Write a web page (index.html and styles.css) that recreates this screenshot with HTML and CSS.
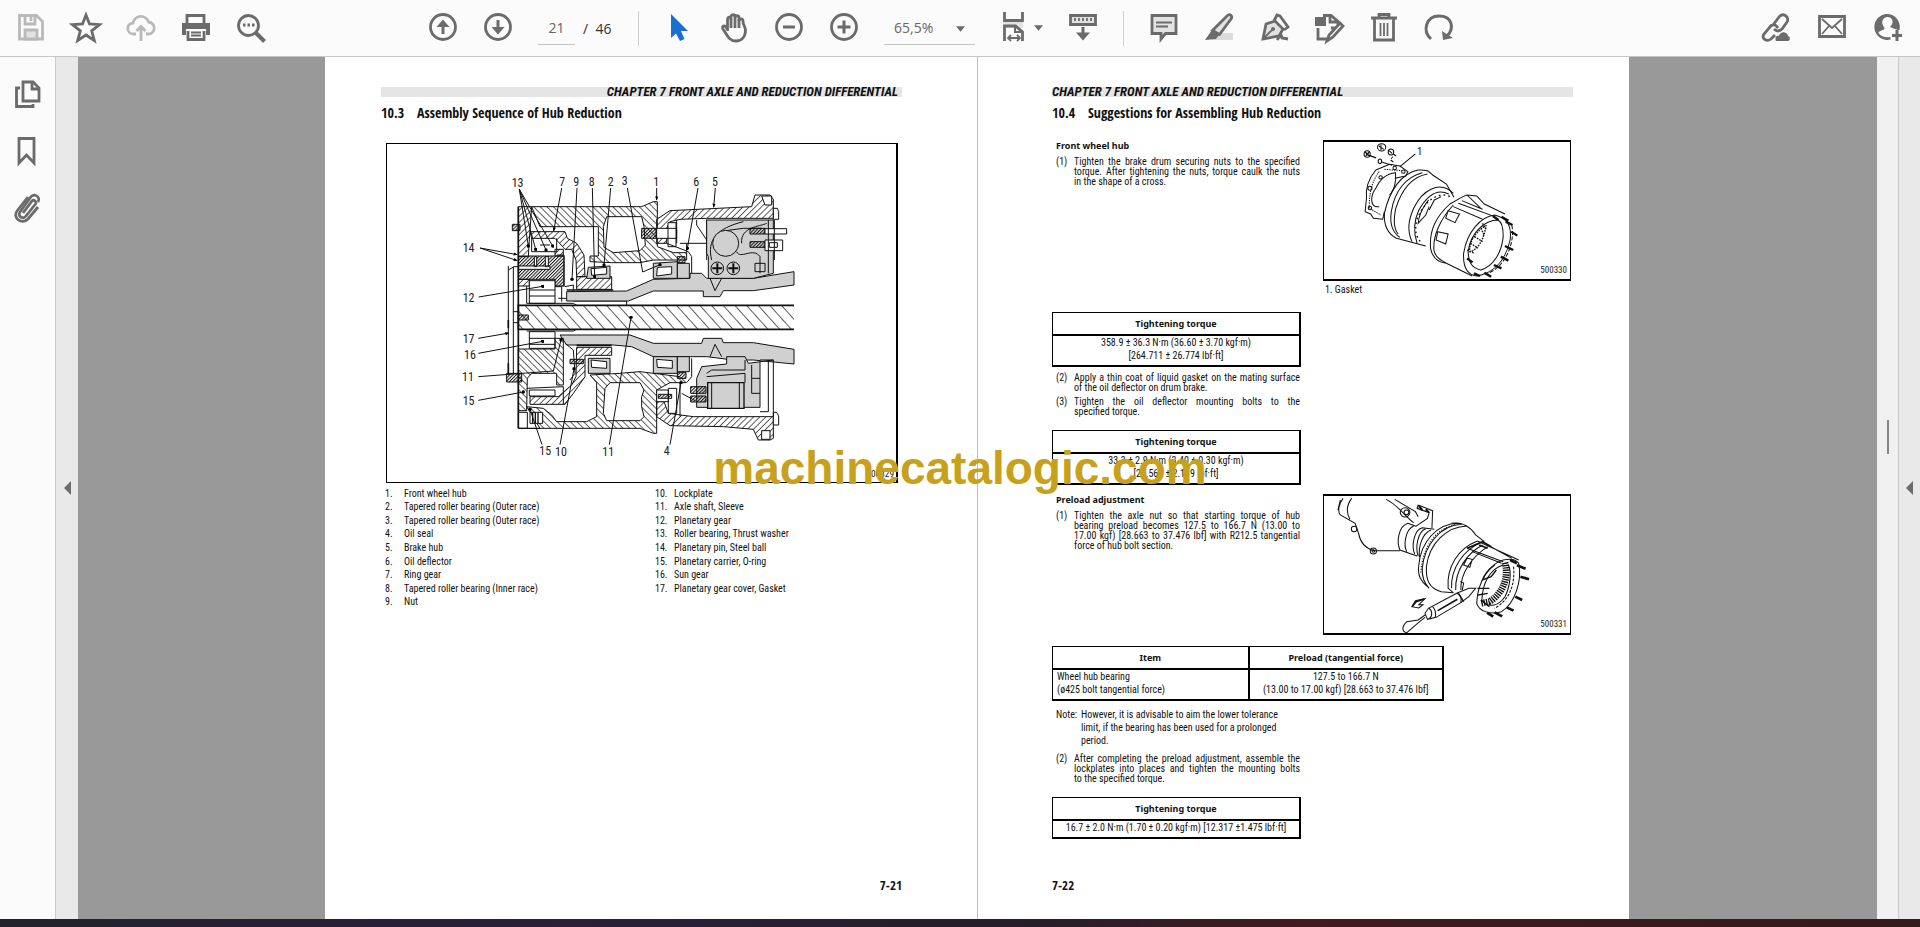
FILE: index.html
```html
<!DOCTYPE html>
<html lang="en">
<head>
<meta charset="utf-8">
<title>Document viewer</title>
<link rel="stylesheet" href="styles.css">
</head>
<body>
<header class="toolbar">
  <div class="tools">
    <button class="tool off" aria-label="Save"><svg viewBox="0 0 28 28"><path d="M2.500 1.500h17l6 6v17.500h-23z"/><path d="M8 2v8h10v-7M14 3v4"/><path class="pale" d="M8 16h12v9H8z"/></svg></button>
    <button class="tool" aria-label="Favourite"><svg viewBox="0 0 28 28"><path d="M14 1l3.500 9 10 .6-7.800 6.200 2.600 9.700-8.300-5.500-8.300 5.500 2.600-9.700L.5 10.600l10-.6z"/></svg></button>
    <button class="tool off" aria-label="Upload"><svg viewBox="0 0 28 28"><path d="M9 20H6.500a5.500 5.500 0 0 1-.5-11 8 8 0 0 1 15.500-1A6 6 0 0 1 21 20h-2"/><path d="M14 27V13M9.500 17l4.500-4.500 4.500 4.500"/></svg></button>
    <button class="tool" aria-label="Print"><svg viewBox="0 0 28 28"><path class="fill" d="M0 9h28v12h-4v-6H4v6H0z"/><path class="fill" d="M0 9h28v5H0z"/><path d="M5 9V1.500h17V9M6 17v8.500h16V17M2 12v9M26 12v9"/><path class="thin" d="M9 18.500h10M9 21.500h10"/></svg></button>
    <button class="tool" aria-label="Search"><svg viewBox="0 0 28 28"><circle cx="11.500" cy="11.500" r="10"/><path d="M18.500 18.500l9 9" stroke-width="4"/><path d="M6 11h2.500M10.500 11h2.500M15 11h2.500"/></svg></button>
  </div>
  <div class="center">
    <div class="tools">
      <button class="tool" aria-label="Previous page"><svg viewBox="0 0 28 28"><circle cx="14" cy="13" r="12.500"/><path d="M14 20V8" stroke-width="3"/><path class="fill" d="M7.500 13L14 5.500l6.500 7.500z"/></svg></button>
      <button class="tool" aria-label="Next page"><svg viewBox="0 0 28 28"><circle cx="14" cy="13" r="12.500"/><path d="M14 6v12" stroke-width="3"/><path class="fill" d="M7.500 13l6.500 7.500 6.500-7.500z"/></svg></button>
    </div>
    <div class="pager"><input aria-label="Page" value="21"><span>/&nbsp; 46</span></div>
    <i class="rule"></i>
    <div class="tools">
      <button class="tool" aria-label="Select"><svg viewBox="0 0 28 28"><path fill="#1b6fd0" stroke="none" d="M6 0v24l5-4.500 4 7.500 4.500-2-3.500-8h7z"/></svg></button>
      <button class="tool" aria-label="Pan"><svg viewBox="0 0 28 28"><path d="M7.500 17V5.500c0-3 3.500-3 3.500 0V3c0-3 4-3 4 0v1c0-3 4-3 4 0v3c0-2.500 4-3 4 0-.2 4 2.500 6 2.500 9 0 7-4 11-9.500 11-7 0-9-6-13-12-1.500-3 1.500-4 3-2l2 3.500"/><path d="M11 5v9M15 4v10M19 5v9"/></svg></button>
      <button class="tool" aria-label="Zoom out"><svg viewBox="0 0 28 28"><circle cx="14" cy="13" r="12.500"/><path d="M8 13h12" stroke-width="3"/></svg></button>
      <button class="tool" aria-label="Zoom in"><svg viewBox="0 0 28 28"><circle cx="14" cy="13" r="12.500"/><path d="M7.500 13h13M14 6.500v13" stroke-width="3"/></svg></button>
    </div>
    <div class="zoom"><select aria-label="Zoom"><option>65,5%</option></select><svg class="caret" viewBox="0 0 10 6"><path d="M0 0h10L5 6z"/></svg></div>
    <button class="tool fit" aria-label="Page fit"><svg viewBox="0 0 28 28"><path class="pale" stroke="none" d="M2 7h20v7H2z"/><path d="M3.500-2v8.500h18V-2M3.500 27V12h11l7 6v9"/><path d="M14 12v6h7" stroke-width="2"/><path class="thin" d="M8 24h10M10 21l-3 3 3 3M16 21l3 3-3 3"/></svg><svg class="caret" viewBox="0 0 10 6"><path d="M0 0h10L5 6z"/></svg></button>
    <button class="tool" aria-label="Read mode"><svg viewBox="0 0 28 28"><path class="pale" d="M1.500 1.500h25v9h-25z"/><path class="thin" d="M6 4v4M10 4v4M14 4v4M18 4v4M22 4v4" stroke-dasharray="3 1"/><path d="M14 13v9" stroke-width="3"/><path class="fill" d="M7 18.500h14l-7 8z"/></svg></button>
    <i class="rule"></i>
    <div class="tools">
      <button class="tool" aria-label="Comment"><svg viewBox="0 0 28 28"><path class="pale" d="M2 1.500h24v18H15.500L11 25v-5.500H2z"/><path class="thin" d="M6 8.500h16M6 12.500h12"/></svg></button>
      <button class="tool" aria-label="Highlight"><svg viewBox="0 0 28 28"><path fill="#dcdcdc" stroke="none" d="M7 19h21v7H7z"/><path class="pale" d="M22 2c3-3 6 0 4 3L14.500 20.500l-7-4z"/><path class="fill" d="M7 16l7 5-3 4-11 1z"/></svg></button>
      <button class="tool" aria-label="Sign"><svg viewBox="0 0 28 28"><path class="pale" d="M15 7l8 8-4 7L3 25 6 10z"/><path d="M14 7l3-6 3 1 8 11-4 3"/><path class="thin" d="M3 25l9-9"/><circle class="fill" cx="13" cy="15" r="2"/><path d="M17 26l4-5 1 3 6 1"/></svg></button>
      <button class="tool" aria-label="Edit document"><svg viewBox="0 0 28 28"><path class="fill" d="M0 3h11v9H0z"/><path d="M8 1.500h8l7 6V11M15 2v6h7M3 14v11h9M16 19l9-10 3 3-10 11-6 4 2-6zM16 14h4"/></svg></button>
      <button class="tool" aria-label="Delete"><svg viewBox="0 0 28 28"><path d="M1 4h26M9 3V.5h10V3M4.500 5v21h19V5"/><path class="thin" d="M10.500 9v13M14 9v13M17.500 9v13"/></svg></button>
      <button class="tool" aria-label="Rotate"><svg viewBox="0 0 28 28"><path d="M6 25C-3 17 1 2 14 2s16 12 8 20" stroke-width="3"/><path class="fill" d="M17 17l1 9 10-2z"/></svg></button>
    </div>
  </div>
  <div class="tools share">
    <button class="tool" aria-label="Share link"><svg viewBox="0 0 28 28"><path d="M11 11l6-8c4-5 11 0 8 5l-5 7c-3 3-6 2-8 0M16 14c-3-5-7-3-8-1l-6 7c-3 5 3 8 7 5l4-4"/><path class="fill" d="M14 27c-2-5 2-6 3-5 1-5 8-5 9 0 3 1 2 5 0 5z"/></svg></button>
    <button class="tool" aria-label="E-mail"><svg viewBox="0 0 28 28"><path d="M1.500 2.500h25v20h-25z"/><path class="thin" d="M4 5l10 9L24 5M4 20l7-8M24 20l-7-8"/></svg></button>
    <button class="tool" aria-label="Add person"><svg viewBox="0 0 28 28"><path class="fill" fill-rule="evenodd" d="M13 0a13 13 0 0 1 12.500 16H24l-3-1-5-2c5-5 2-10-2.500-10S6 8 10.500 14c0 3-6 2-6 5 3 4 7 5 12 4v2.600A13 13 0 1 1 13 0z"/><path d="M23 16v11M18 21.500h10" stroke-width="3"/></svg></button>
  </div>
</header>

<div class="workspace">
  <nav class="sidebar">
    <button class="tool" aria-label="Thumbnails"><svg viewBox="0 0 28 28"><path d="M9 2h10l6 6v13H9z"/><path d="M18 2v7h7M6 8H2.500v18.500H19V24"/></svg></button>
    <button class="tool" aria-label="Bookmarks"><svg viewBox="0 0 28 28"><path d="M5 1.500h15V26l-7.500-8L5 26z"/></svg></button>
    <button class="tool" aria-label="Attachments"><svg viewBox="0 0 28 28"><path d="M9 19L18 7c2-2 5 1 3.500 3L12 22c-3 4-9 0-6-4L16 4c4-6 11-1 8 4"/><path d="M24 13L14 25C8 31-2 24 3 17L14 3"/></svg></button>
  </nav>
  <button class="handle" aria-label="Toggle navigation pane"><svg viewBox="0 0 7 14"><path d="M7 0v14L0 7z"/></svg></button>

  <main class="viewer">
    <article class="page left">
      <p class="chapter"><span>CHAPTER 7 FRONT AXLE AND REDUCTION DIFFERENTIAL</span></p>
      <h2><span>10.3</span>Assembly Sequence of Hub Reduction</h2>
      <figure class="assembly">
        <svg viewBox="-159 -48 1527 1014" role="img" aria-label="Hub reduction section">
          <defs>
            <pattern id="ha" width="14" height="14" patternUnits="userSpaceOnUse" patternTransform="rotate(-45)"><path d="M0 0v14" stroke="#111" stroke-width="4"/></pattern>
            <pattern id="hb" width="13" height="13" patternUnits="userSpaceOnUse" patternTransform="rotate(45)"><path d="M0 0v13" stroke="#111" stroke-width="4"/></pattern>
            <pattern id="hc" width="26" height="26" patternUnits="userSpaceOnUse" patternTransform="rotate(-42)"><path d="M0 0v26" stroke="#111" stroke-width="4"/></pattern>
            <pattern id="hd" width="7" height="7" patternUnits="userSpaceOnUse" patternTransform="rotate(45)"><path d="M0 0v7" stroke="#111" stroke-width="6"/></pattern>
            <marker id="ar" viewBox="0 0 10 10" refX="9" refY="5" markerWidth="16" markerHeight="12" markerUnits="userSpaceOnUse" orient="auto"><path d="M0 1l10 4-10 4z"/></marker>
            <marker id="dt" viewBox="0 0 10 10" refX="5" refY="5" markerWidth="10" markerHeight="10" markerUnits="userSpaceOnUse"><circle cx="5" cy="5" r="5"/></marker>
          </defs>
          <g class="ink">
            <path fill="url(#ha)" fill-rule="evenodd" d="M275 140H605L640 125H652V260L700 278H740V300H640L600 308H515L450 305V288H475V200H300zM500 170H605L612 200 616 255 600 272 520 278 492 262 490 200z"/>
            <path fill="url(#hb)" d="M235 140H275L268 240 265 290H235z"/>
            <path fill="url(#hb)" d="M270 215H375L382 235 410 250 432 285 435 350H410L408 300 395 268 375 268 370 262 345 235H275z"/>
            <path d="M275 235V275H350V235M300 255H330M350 285H372V380"/>
            <path fill="url(#hb)" d="M345 268H370V288H345z"/>
            <path fill="url(#hd)" d="M235 288H372V378H345V358H235z"/>
            <path fill="#fff" d="M235 318H330V328H235zM283 290h7v30h-7zM316 290h9v30h-9z"/>
            <path fill="url(#hb)" d="M235 358H268V378H235z"/>
            <path fill="#fff" d="M268 362H345V430H268zM268 390H345M268 408H345"/>
            <path d="M260 378V430M345 380H365V425M375 380L400 375V395M355 415H400V423H560V435"/>
            <path class="g" d="M380 395L560 393 640 358 750 355V340H785L800 355H940L1062 335V375L940 392H850L840 410H790V393H640L565 423H380z"/>
            <path d="M810 355L825 392 845 355"/>
            <path fill="url(#hb)" d="M410 350H515V388H410z"/>
            <path class="g" d="M445 322L510 318V355H440z"/><path fill="#fff" d="M453 326L500 322V342L455 346z"/>
            <path class="g" d="M640 310L712 305V355H640z"/><path fill="#fff" d="M652 322L695 320V342L650 348z"/>
            <path class="g" d="M712 310H748V355H712z"/><path fill="url(#hd)" d="M712 290H735V308H712z"/>
            <path fill="url(#hb)" d="M650 178L690 152 935 140 945 105H990L1000 118V175H800L720 178 690 185 680 205V250H650z"/>
            <path fill="#fff" d="M650 205H710V235H650zM684 188H708V260H684z"/><path fill="url(#hd)" d="M605 205H648V235H605z"/>
            <path d="M710 180V250M720 250H800V178M740 278V250M680 250L745 275 755 290V340M770 180V195L800 240V300"/>
            <path fill="#fff" d="M965 108H995V135H975zM1000 145H1012L1016 155V178H1000z"/>
            <path class="g" d="M800 180H1000V340L940 355H805V290L800 280z"/>
            <path d="M815 300C800 240 830 205 910 185M965 205H910L857 212M890 275C900 300 940 260 960 290V340M905 250C900 200 960 200 980 190"/>
            <circle class="g" cx="857" cy="250" r="39"/><circle class="g" cx="832" cy="325" r="19"/><circle class="g" cx="880" cy="325" r="19"/><path stroke-width="6" d="M817 325h30M832 310v30M865 325h30M880 310v30"/>
            <path fill="url(#hd)" d="M930 205H975V222H930zM930 245H975V262H930z"/><path fill="#fff" d="M975 206H1040V222H975zM975 240H1028V272H975zM988 248H1012V262H988z"/><path d="M945 310H975V335H945zM985 180V340M1003 180V300"/>
            <path fill="#fff" stroke="none" d="M235 436H1062V508H235z"/><path fill="url(#hc)" stroke="none" d="M235 436H1062V508H235z"/><path stroke-width="5" d="M1062 436H235V508H1062"/>
            <path fill="url(#hd)" d="M235 465H265V480H235z"/>
            <path d="M260 430H400L410 436M260 513H400L410 508"/>
            <path fill="#fff" d="M268 515H345V565H268zM268 535H345M268 553H345"/>
            <path class="g" d="M360 525H570L640 550H785L790 535H845L850 548H940L1062 568V612L940 600H880L800 590H640L575 560 520 555H380z"/>
            <path d="M810 590L825 553 845 590"/>
            <path fill="url(#ha)" d="M235 567H345V535H370V675H350V640H275L262 655 260 752H235z"/>
            <path fill="#fff" d="M268 690H345V708H268z"/>
            <path fill="url(#hb)" d="M410 562H515V586H435V650L400 700 375 733H270V710H355L395 675 408 650z"/>
            <path class="g" d="M445 595H510V640H445z"/><path fill="#fff" d="M453 600L500 605V625L455 622z"/><path class="g" d="M640 590H712V640H640z"/><path fill="#fff" d="M650 598L697 602V625L652 622z"/><path class="g" d="M712 590H748V635H712z"/><path fill="url(#hd)" d="M712 638H738V655H712zM390 598H430V611H390z"/>
            <path d="M375 550L400 570 405 640 390 660M260 685L370 680V733M755 595V650L740 668"/>
            <path fill="url(#ha)" fill-rule="evenodd" d="M260 740L310 745 335 765 350 785H440L470 770V668L450 645 540 640 600 635 720 650 738 668H690L650 690V820H640L600 805H300zM495 685L510 668H600L612 690 605 710V740L612 770 600 782H500L490 760z"/>
            <path fill="#fff" d="M235 757H262V805H235zM270 757H308V790H270z"/><path d="M278 757v33M286 757v33M294 757v33M235 805H300" stroke-width="4"/>
            <path fill="url(#hb)" d="M650 725H672L685 760 760 770H1000V835L990 840H955L940 808 850 800 690 797 650 770z"/>
            <path fill="#fff" d="M650 690H685V725H650zM685 685H710V760H685zM1000 757H1010L1016 768V795H1000zM965 812H990V838H965z"/><path fill="url(#hd)" d="M655 703H695V715H655z"/>
            <path d="M720 668V770M725 700L765 722M1000 600V770M985 600V755H960"/>
            <path class="g" d="M785 620L860 612V590H915L925 610 1000 600H960V742H770V655z"/>
            <path class="g" d="M803 668H912V745H803z" stroke-width="4"/><path d="M815 668V745M898 668V745M800 640L815 630H915V600M915 668V640L800 650M935 615V655H960M935 655V700H960"/>
            <path fill="url(#hd)" d="M752 680H798V700H752zM752 708H798V726H752z"/>
            <path fill="url(#hd)" d="M217 193H240V212H217zM200 640H245V666H200z"/>
            <path d="M205 330L222 320H235M205 318V640M220 320V640M220 455H235M220 488H235" />
            <path stroke-width="5" d="M235 140V805M205 480V505M205 610V640M380 390H520M410 556H515"/>
          </g>
          <g class="lead">
            <path marker-end="url(#dt)" d="M238 88L265 258"/><path marker-end="url(#dt)" d="M238 88L287 268"/><path marker-end="url(#dt)" d="M238 88L318 270"/><path marker-end="url(#dt)" d="M238 88L338 258"/>
            <path marker-end="url(#ar)" d="M365 84L341 213"/><path marker-end="url(#dt)" d="M411 84L396 358"/><path marker-end="url(#dt)" d="M457 84L464 350"/><path marker-end="url(#dt)" d="M512 84L492 315"/>
            <path marker-end="url(#dt)" d="M562 84L608 336 660 314"/><path marker-end="url(#ar)" d="M650 84V120"/><path marker-end="url(#dt)" d="M774 84L742 265"/><path marker-end="url(#ar)" d="M826 84L821 142"/>
            <path marker-end="url(#ar)" d="M120 264L232 284"/><path marker-end="url(#ar)" d="M120 264L232 302"/><path marker-end="url(#dt)" d="M116 411L308 379"/><path marker-end="url(#ar)" d="M115 535L207 519"/><path marker-end="url(#dt)" d="M115 580L308 544"/>
            <path marker-end="url(#dt)" d="M115 650L340 633 363 540"/><path marker-end="url(#dt)" d="M115 721L250 696"/><path marker-end="url(#dt)" d="M306 854L270 748"/><path marker-end="url(#dt)" d="M360 854L402 626"/><path marker-end="url(#dt)" d="M508 854L573 472"/><path marker-end="url(#dt)" d="M690 854L723 668"/>
          </g>
          <g class="num">
            <text x="215" y="80">13</text><text x="358" y="78">7</text><text x="400" y="78">9</text><text x="446" y="78">8</text><text x="503" y="78">2</text><text x="545" y="76">3</text><text x="640" y="78">1</text><text x="760" y="78">6</text><text x="816" y="78">5</text>
            <text x="68" y="276">14</text><text x="68" y="426">12</text><text x="68" y="550">17</text><text x="72" y="597">16</text><text x="66" y="663">11</text><text x="68" y="735">15</text>
            <text x="298" y="886">15</text><text x="345" y="888">10</text><text x="487" y="888">11</text><text x="671" y="886">4</text>
            <text class="code" x="1362" y="952" text-anchor="end">500329</text>
          </g>
        </svg>
      </figure>
      <div class="parts">
        <ol>
          <li><b>1.</b>Front wheel hub</li><li><b>2.</b>Tapered roller bearing (Outer race)</li><li><b>3.</b>Tapered roller bearing (Outer race)</li><li><b>4.</b>Oil seal</li><li><b>5.</b>Brake hub</li><li><b>6.</b>Oil deflector</li><li><b>7.</b>Ring gear</li><li><b>8.</b>Tapered roller bearing (Inner race)</li><li><b>9.</b>Nut</li>
        </ol>
        <ol>
          <li><b>10.</b>Lockplate</li><li><b>11.</b>Axle shaft, Sleeve</li><li><b>12.</b>Planetary gear</li><li><b>13.</b>Roller bearing, Thrust washer</li><li><b>14.</b>Planetary pin, Steel ball</li><li><b>15.</b>Planetary carrier, O-ring</li><li><b>16.</b>Sun gear</li><li><b>17.</b>Planetary gear cover, Gasket</li>
        </ol>
      </div>
      <footer>7-21</footer>
    </article>

    <article class="page right">
      <p class="chapter"><span>CHAPTER 7 FRONT AXLE AND REDUCTION DIFFERENTIAL</span></p>
      <h2><span>10.4</span>Suggestions for Assembling Hub Reduction</h2>
      <section class="split first">
        <div>
          <h3>Front wheel hub</h3>
          <div class="step"><span>(1)</span><p><span>Tighten the brake drum securing nuts to the specified</span> <span>torque. After tightening the nuts, torque caulk the nuts</span> in the shape of a cross.</p></div>
          <table class="torque one"><thead><tr><th>Tightening torque</th></tr></thead><tbody><tr><td>358.9 ± 36.3 N·m (36.60 ± 3.70 kgf·m)<br>[264.711 ± 26.774 lbf·ft]</td></tr></tbody></table>
          <div class="step next"><span>(2)</span><p><span>Apply a thin coat of liquid gasket on the mating surface</span> of the oil deflector on drum brake.</p></div>
          <div class="step"><span>(3)</span><p><span>Tighten the oil deflector mounting bolts to the</span> specified torque.</p></div>
          <table class="torque"><thead><tr><th>Tightening torque</th></tr></thead><tbody><tr><td>33.3 ± 2.9 N·m (3.40 ± 0.30 kgf·m)<br>[24.561 ± 2.139 lbf·ft]</td></tr></tbody></table>
        </div>
        <div>
          <figure class="photo">
            <svg viewBox="0 0 246 137" role="img" aria-label="Gasket, drum and hub">
              <g class="sketch" transform="matrix(.3444 0 0 .3333 -284 -62)">
                <ellipse cx="950" cy="222" rx="9" ry="10"/><path stroke-width="4" d="M944 216l12 12M946 228l10-12M956 226l20 8"/><ellipse cx="992" cy="202" rx="12" ry="11"/><path d="M984 198l14 10M990 194v16"/><ellipse cx="1019" cy="216" rx="8" ry="9"/><path d="M1014 212l8 8M1026 222l8 6M1018 240l8 6M1020 236l4-6"/><ellipse cx="987" cy="244" rx="5" ry="7"/><path d="M992 246l30 10M1090 222l-45 38"/>
                <path d="M975 270L1015 253 1045 258 1068 275 1062 288 1030 295M975 270C955 295 945 325 948 355L944 395 960 402 968 415 995 418 1000 395M985 380C955 385 960 345 975 325 990 290 1015 280 1032 278 1035 300 1030 330 1015 345"/>
                <path stroke-dasharray="4 3" d="M985 275C965 300 955 340 956 385L990 405M1000 268L1050 272"/><circle cx="958" cy="325" r="6"/><circle cx="958" cy="384" r="5"/><circle cx="1030" cy="264" r="5"/><circle cx="1055" cy="275" r="5"/><circle cx="989" cy="292" r="5"/>
                <path d="M1098 270C1050 280 1015 330 1000 400 998 440 1010 462 1035 475L1120 498M1098 270C1125 268 1130 275 1140 285L1180 312 1202 352M1110 278C1065 290 1030 330 1020 395 1015 430 1020 455 1045 472M1125 282C1080 290 1050 330 1033 385 1026 420 1026 445 1040 462"/>
                <path d="M1200 340C1160 300 1110 330 1085 385 1070 420 1065 450 1080 485M1187 342C1155 325 1125 345 1100 390 1082 430 1085 460 1095 490M1128 360C1115 380 1100 400 1098 430L1120 405 1130 380M1165 350l-20 10-15 30"/>
                <path stroke-dasharray="5 9" stroke-width="4" d="M1190 350C1150 330 1110 375 1094 420 1088 450 1090 470 1106 486"/>
                <path d="M1190 372C1150 410 1130 450 1134 505 1140 535 1160 548 1180 550M1200 375C1160 420 1140 470 1144 512 1150 535 1165 540 1180 550L1255 588M1190 372L1228 350 1240 345 1268 348 1290 372 1350 402M1200 380L1285 418M1215 370L1320 410M1225 362L1285 388M1240 345L1280 385"/>
                <path d="M1185 392L1218 402 1205 428 1178 415zM1155 455L1185 462 1178 492 1150 480z"/>
                <path d="M1320 405C1280 410 1240 455 1230 520 1228 560 1240 585 1270 588 1310 580 1350 550 1365 480 1370 440 1360 415 1320 405zM1330 420C1290 420 1250 460 1243 515 1245 550 1255 565 1280 570 1315 560 1340 520 1345 470 1345 440 1340 425 1330 420"/>
                <path stroke-width="4" stroke-dasharray="5 3" d="M1290 440C1260 460 1245 490 1248 515 1270 510 1290 480 1295 435M1280 445L1290 465M1262 470L1285 485M1250 490L1272 505M1240 510L1262 520M1285 430L1295 448"/>
                <path stroke-width="7" d="M1340 410l20 12M1352 425l20 10M1368 455l18 12M1350 498l24 12M1338 530l22 12M1318 555l22 10M1290 578l20 12M1260 580l18 8M1240 535l16 12M1315 408l16 12"/>
                <path d="M1370 436C1380 480 1355 560 1300 580" stroke-dasharray="12 5"/>
              </g>
              <text x="93" y="13" class="mark">1</text><text x="243" y="131" text-anchor="end">500330</text>
            </svg>
          </figure>
          <p class="caption">1. Gasket</p>
        </div>
      </section>
      <section class="split">
        <div>
          <h3>Preload adjustment</h3>
          <div class="step"><span>(1)</span><p><span>Tighten the axle nut so that starting torque of hub</span> <span>bearing preload becomes 127.5 to 166.7 N (13.00 to</span> <span>17.00 kgf) [28.663 to 37.476 lbf] with R212.5 tangential</span> force of hub bolt section.</p></div>
        </div>
        <figure class="photo">
          <svg viewBox="0 0 246 137" role="img" aria-label="Measuring hub preload">
            <g class="sketch" transform="matrix(.3444 0 0 .3333 -284 -16)">
              <path d="M880 55C865 75 865 95 872 105L915 130 925 160C930 190 945 205 970 212L1045 212M905 55C890 75 888 95 900 118M872 60L865 90M1005 58C1040 75 1060 110 1085 128M1030 58L1090 95 1098 110"/>
              <circle cx="912" cy="147" r="8"/><circle cx="968" cy="213" r="9"/><circle cx="968" cy="213" r="4"/><circle cx="1060" cy="97" r="14"/><circle cx="1064" cy="97" r="7" stroke-width="3"/>
              <path d="M1098 75L1140 92 1138 145M1098 75L1095 85 1130 98 1125 115 1090 140"/><path stroke-width="6" d="M1100 78l10 12M1120 88l10 10"/>
              <path d="M1068 130C1040 140 1035 185 1045 210L1095 228M1085 138C1060 150 1055 195 1065 215M1110 143C1085 150 1078 200 1088 222M1120 146C1095 155 1090 205 1098 228M1068 130L1090 138M1110 143L1145 148M1135 150C1110 160 1098 200 1102 232"/>
              <path d="M1215 130C1150 130 1105 190 1100 255 1095 290 1108 305 1125 320M1225 133C1160 135 1115 200 1110 265 1108 295 1118 310 1130 325M1240 138C1180 140 1130 190 1122 260 1120 300 1130 325 1165 335L1200 338M1195 130C1225 125 1250 140 1265 165L1290 185"/>
              <path stroke-width="4" stroke-dasharray="3 5" d="M1205 135C1150 145 1110 200 1106 280"/>
              <path d="M1270 183C1215 205 1180 260 1185 325L1200 338M1280 188C1230 210 1192 265 1195 325M1285 195C1240 220 1205 270 1207 330M1300 200C1255 230 1220 280 1222 330M1240 235L1255 238 1248 262 1230 255zM1220 305l10 4-4 22"/>
              <path stroke-width="5" d="M1240 205L1285 185 1310 200M1275 195L1300 205"/><path d="M1240 205L1345 245M1270 183L1390 240M1300 195L1370 235M1255 215L1340 250"/>
              <path d="M1345 240C1310 250 1270 300 1268 370 1275 395 1310 405 1340 395 1380 370 1400 300 1390 250 1380 235 1365 235 1345 240zM1345 255C1310 265 1285 305 1283 360 1300 385 1330 380 1350 350 1365 320 1370 275 1360 255"/>
              <path stroke-width="20" stroke-dasharray="4 3" d="M1350 248C1362 290 1345 340 1305 365L1280 370"/><path stroke-width="4" d="M1320 255C1300 270 1288 290 1285 300L1310 290 1325 270M1270 325L1305 325M1272 345L1300 340M1280 360l25 20"/>
              <path stroke-width="8" d="M1385 256l25 10M1395 290l25 8M1380 350l20 10M1355 382l20 10M1320 397l22 12M1298 398l18 12M1365 240l20 10"/>
              <path d="M1375 260C1380 310 1365 360 1320 385" stroke-dasharray="8 4"/>
              <path fill="#fff" d="M1210 340L1245 325 1265 325 1245 350 1222 368 1150 412 1125 418 1118 400 1128 385z"/><path stroke-width="5" d="M1155 392L1212 358"/><path d="M1210 340C1222 345 1225 355 1222 368M1140 380C1150 390 1150 400 1148 412M1128 385C1140 390 1140 410 1130 416"/><path stroke-width="4" d="M1215 340l15 25"/>
              <path d="M1118 405L1098 420 1065 425C1050 440 1050 455 1065 458 1080 445 1095 430 1118 412"/>
              <path fill="#fff" d="M1080 380L1090 362 1118 356 1100 374 1112 374 1100 384z"/><path stroke-width="5" d="M1080 380L1092 365 1116 357"/>
            </g>
            <text x="243" y="131" text-anchor="end">500331</text>
          </svg>
        </figure>
      </section>
      <table class="torque preload"><thead><tr><th>Item</th><th>Preload (tangential force)</th></tr></thead><tbody><tr><td>Wheel hub bearing<br>(ø425 bolt tangential force)</td><td>127.5 to 166.7 N<br>(13.00 to 17.00 kgf) [28.663 to 37.476 lbf]</td></tr></tbody></table>
      <div class="note"><span>Note:</span><p>However, it is advisable to aim the lower tolerance<br>limit, if the bearing has been used for a prolonged<br>period.</p></div>
      <div class="step column"><span>(2)</span><p><span>After completing the preload adjustment, assemble the</span> <span>lockplates into places and tighten the mounting bolts</span> to the specified torque.</p></div>
      <table class="torque column"><thead><tr><th>Tightening torque</th></tr></thead><tbody><tr><td>16.7 ± 2.0 N·m (1.70 ± 0.20 kgf·m) [12.317 ±1.475 lbf·ft]</td></tr></tbody></table>
      <footer>7-22</footer>
    </article>
  </main>

  <div class="scroll"><i></i></div>
  <button class="handle end" aria-label="Toggle tools pane"><svg viewBox="0 0 7 14"><path d="M7 0v14L0 7z"/></svg></button>
</div>
<div class="taskbar"></div>
<div class="watermark">machinecatalogic.com</div>
</body>
</html>
```
FILE: styles.css
```css
* { box-sizing: border-box; }
body {
  margin: 0;
  min-height: 100vh;
  display: flex;
  flex-direction: column;
  position: relative;
  background: #fff;
  color: #111;
  font-family: "Open Sans", "Noto Sans", sans-serif;
}
h2, h3, p, figure, ol { margin: 0; padding: 0; }
button { border: 0; padding: 0; background: none; }

.toolbar {
  display: flex;
  align-items: center;
  height: 57px;
  padding: 0 18px 0 17px;
  background: #fbfbfb;
  border-bottom: 1px solid #c6c6c6;
}
.tools { display: flex; gap: 27px; }
.center { display: flex; align-items: center; gap: 26px; margin-left: 164px; }
.share { gap: 28px; margin-left: auto; }
.tool { display: block; flex: none; width: 28px; height: 28px; }
.tool svg {
  display: block;
  width: 28px;
  height: 28px;
  overflow: visible;
  fill: none;
  stroke: #6b6b6b;
  stroke-width: 2.8;
}
.tool.off svg { stroke: #b9b9b9; }
.tool .fill { fill: #6b6b6b; stroke: none; }
.tool .pale { fill: #e2e2e2; }
.tool .thin { stroke-width: 1.8; }
.rule { width: 1px; height: 35px; background: #cfcfcf; }
.pager { display: flex; align-items: center; gap: 8px; width: 74px; font-size: 14px; color: #333; white-space: nowrap; }
.pager input {
  width: 37px;
  height: 34px;
  padding: 0;
  border: 0;
  border-bottom: 1px solid #c4c4c4;
  background: none;
  text-align: center;
  font: 14px "Open Sans", sans-serif;
  color: #666;
}
.zoom { position: relative; width: 91px; }
.zoom select {
  display: block;
  width: 100%;
  height: 34px;
  padding: 0 10px;
  border: 0;
  border-bottom: 1px solid #c4c4c4;
  border-radius: 0;
  appearance: none;
  background: none;
  font: 14px "Open Sans", sans-serif;
  color: #666;
}
.tool .caret, .caret { width: 9px; height: 6px; fill: #6b6b6b; stroke: none; }
.zoom .caret { position: absolute; right: 10px; top: 15px; }
.fit { display: flex; align-items: center; justify-content: space-between; width: 42px; }

.workspace { flex: 1; display: flex; }
.sidebar, .handle, .scroll { flex: none; }
.sidebar {
  display: flex;
  flex-direction: column;
  align-items: center;
  gap: 29px;
  width: 56px;
  padding-top: 23px;
  background: #fbfbfb;
  border-right: 1px solid #c9c9c9;
}
.handle { display: flex; align-items: center; justify-content: center; width: 22px; background: #e9e9e9; }
.handle svg { width: 7px; height: 14px; fill: #6b6b6b; }
.handle.end { border-left: 1px solid #c9c9c9; }
.viewer { flex: 1; min-width: 0; display: flex; padding: 0 248px 0 247px; background: #999; }
.scroll { display: flex; align-items: center; justify-content: center; width: 21px; padding-bottom: 102px; background: #f0f0f0; }
.scroll i { width: 2px; height: 34px; background: #858585; }
.taskbar { height: 8px; background: linear-gradient(90deg, #23222e, #2a2038 30%, #241f2a 52%, #421a20 68%, #331a1c); }

.page {
  flex: 1;
  min-width: 0;
  display: flex;
  flex-direction: column;
  padding: 30px 75px 27px 56px;
  background: #fff;
  font: 10px/10px "Roboto Condensed", Lato, sans-serif;
}
.page.right { padding: 30px 56px 27px 74px; border-left: 1px solid #bdbdbd; }
.chapter { height: 10px; background: #e5e5e5; font: italic bold 13px/10px "Roboto Condensed", Lato, sans-serif; }
.left .chapter { padding-right: 4px; text-align: right; }
.chapter span { white-space: nowrap; }
h2 { display: flex; margin-top: 9px; font: bold 14px/14px "Open Sans Condensed", Lato, sans-serif; }
h2 span { width: 36px; }
h3 { padding-left: 4px; font: bold 9px/12px "Noto Sans", sans-serif; }
footer { margin-top: auto; font: bold 13px/14px "Open Sans Condensed", Lato, sans-serif; }
.left footer { text-align: right; }

.assembly { margin: 23px 4px 0 5px; border: solid #000; border-width: 1px 2px 1px 1px; }
.assembly svg, .photo svg { display: block; width: 100%; }
.ink { fill: none; stroke: #111; stroke-width: 3; }
.ink .g { fill: #d0d0d0; }
.lead { fill: none; stroke: #111; stroke-width: 3; }
.num { font-size: 36px; fill: #222; }
.num .code { font-size: 28px; }

.parts { display: flex; margin-top: 4px; padding-left: 4px; }
.parts ol {
  flex: none;
  display: grid;
  grid-template-rows: repeat(9, 1fr);
  width: 270px;
  height: 122px;
  list-style: none;
}
.parts ol + ol { width: 200px; }
.parts li { display: flex; align-items: center; }
.parts b { width: 19px; font-weight: normal; }

.split { display: grid; grid-template-columns: 249px 248px; gap: 22px; margin-top: 9px; }
.split.first { margin-top: 20px; }
.photo { border: solid #000; border-width: 2px 1px; }
.sketch { fill: none; stroke: #111; stroke-width: 3; }
.photo text { font-size: 9px; fill: #222; }
.photo .mark { font-size: 11px; }
.caption { margin-top: 4px; padding-left: 2px; }
.step { display: flex; margin-top: 4px; padding: 0 1px 0 4px; }
.step > span { width: 18px; }
.step p { flex: 1; }
.step p span { display: block; white-space: nowrap; text-align-last: justify; }
h3 + .step { margin-top: 5px; }
.step.next { margin-top: 6px; }
.step.column { width: 249px; margin-top: 7px; }
.note { display: flex; margin-top: 7px; padding-left: 4px; line-height: 13px; }
.note span { width: 25px; }

.torque {
  width: 249px;
  margin-top: 13px;
  border: solid #000;
  border-width: 1px 2px 2px 1px;
  border-spacing: 0;
  text-align: center;
}
.torque th { height: 23px; padding: 0; border-bottom: 2px solid #000; font: bold 9px/12px "Noto Sans", sans-serif; }
.torque td { padding: 0 0 3px; line-height: 13px; }
.torque.one { margin-top: 125px; }
.preload { width: 392px; margin-top: 11px; table-layout: fixed; }
.preload th + th, .preload td + td { border-left: 2px solid #000; }
.preload td:first-child { padding-left: 4px; text-align: left; }

.watermark {
  position: absolute;
  top: 445px;
  left: 0;
  right: 0;
  text-align: center;
  font: bold 46px/46px "Liberation Sans", Arial, sans-serif;
  color: #c8a11c;
  pointer-events: none;
}
```
